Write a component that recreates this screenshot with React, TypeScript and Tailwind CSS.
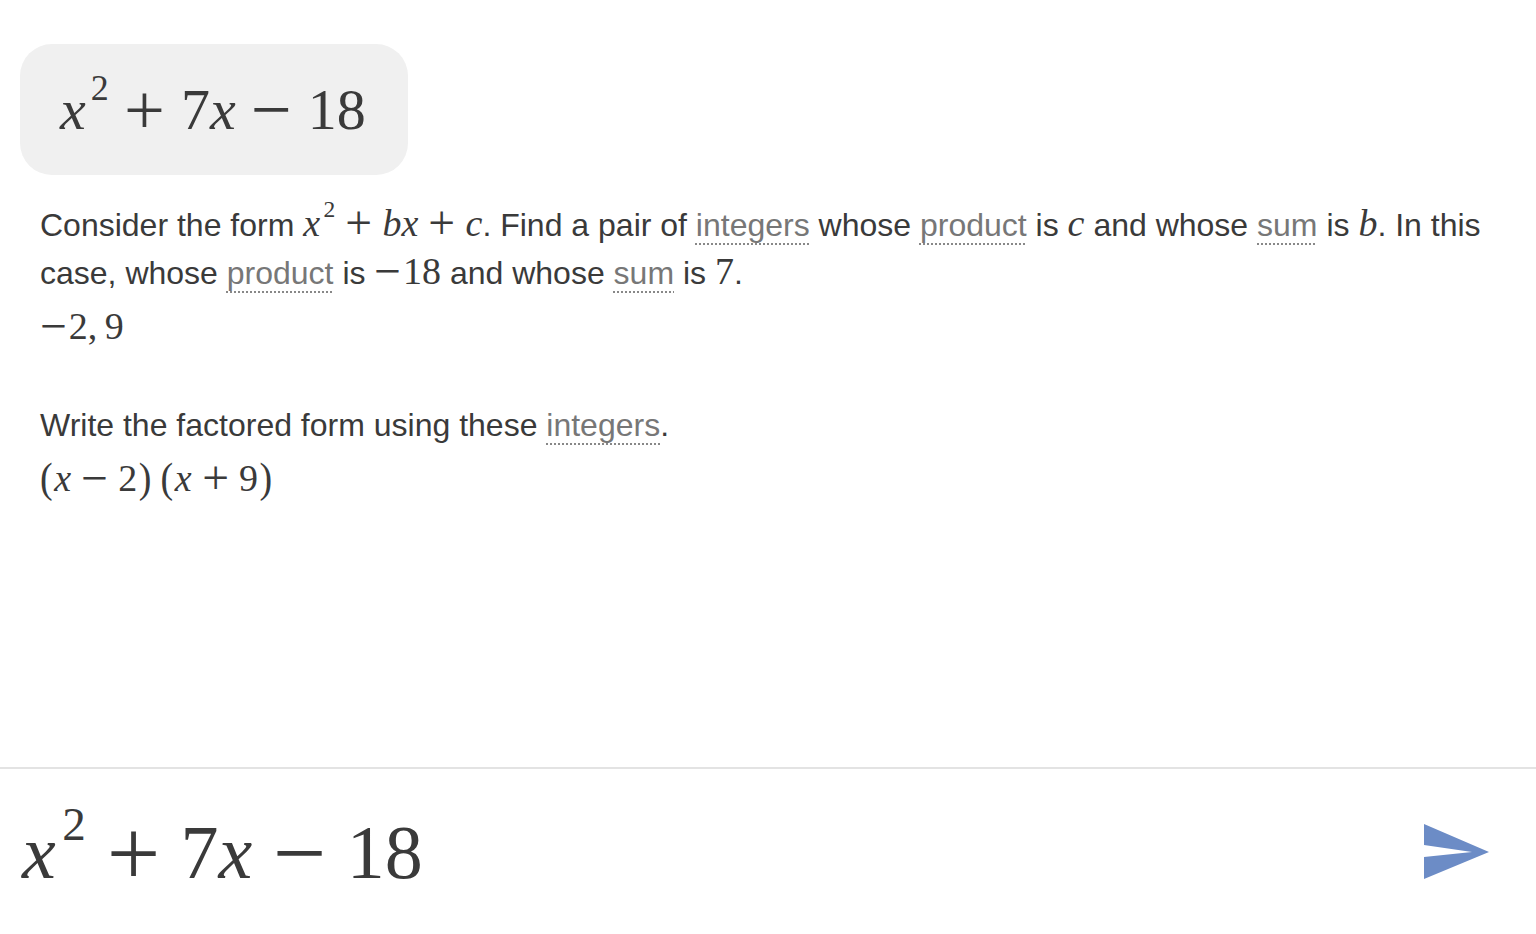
import React from "react";

const serif = { fontFamily: '"Liberation Serif", "DejaVu Serif", serif' };

function V({ children }: { children: React.ReactNode }) {
  return <span className="italic">{children}</span>;
}

// binary operator, scaled up to the look of the TeX font
function Op({ children }: { children: React.ReactNode }) {
  return <span className="mx-[0.34em] inline-block scale-125 leading-none">{children}</span>;
}

function Neg() {
  return <span className="ml-[0.07em] mr-[0.12em] inline-block scale-125 leading-none">−</span>;
}

function Sq() {
  return <sup className="-top-[0.8em] ml-[0.14em] text-[0.62em]">2</sup>;
}

function Term({ children }: { children: React.ReactNode }) {
  return (
    <span className="text-[#777] underline decoration-dotted decoration-[#888] decoration-2 underline-offset-[7px]">
      {children}
    </span>
  );
}

function M({ children }: { children: React.ReactNode }) {
  return (
    <span style={serif} className="text-[38px] leading-none">
      {children}
    </span>
  );
}

function Paren({ children, className = "" }: { children: React.ReactNode; className?: string }) {
  return <span className={"mx-[0.04em] inline-block scale-y-110 " + className}>{children}</span>;
}

function Quadratic() {
  return (
    <>
      <V>x</V>
      <Sq />
      <Op>+</Op>7<V>x</V>
      <Op>−</Op>18
    </>
  );
}

export default function App() {
  return (
    <div className="flex h-[934px] w-full flex-col bg-white text-[#3a3a3a]">
      <div className="flex-1 px-5 pt-11">
        <div className="inline-flex h-[131px] items-center rounded-[32px] bg-[#f0f0f0] pl-10 pr-[42px]">
          <span style={serif} className="text-[58px] leading-none">
            <Quadratic />
          </span>
        </div>

        <div
          className="px-5 pt-[26px] text-[32px] leading-[48px]"
          style={{ fontFamily: '"Liberation Sans", Arial, sans-serif' }}
        >
          <p>
            Consider the form{" "}
            <M>
              <V>x</V>
              <Sq />
              <Op>+</Op>
              <V>bx</V>
              <Op>+</Op>
              <V>c</V>
            </M>
            . Find a pair of <Term>integers</Term> whose <Term>product</Term> is <M><V>c</V></M> and
            whose <Term>sum</Term> is <M><V>b</V></M>. In this case, whose <Term>product</Term> is{" "}
            <M>
              <Neg />
              18
            </M>{" "}
            and whose <Term>sum</Term> is <M>7</M>.
          </p>
          <p className="mt-[7px]">
            <M>
              <Neg />
              2,<span className="ml-[0.2em]">9</span>
            </M>
          </p>

          <p className="mt-[49px]">
            Write the factored form using these <Term>integers</Term>.
          </p>
          <p className="mt-[7px]">
            <M>
              <Paren className="ml-0">(</Paren>
              <V>x</V>
              <Op>−</Op>2<Paren>)</Paren>
              <Paren className="ml-[0.2em]">(</Paren>
              <V>x</V>
              <Op>+</Op>9<Paren>)</Paren>
            </M>
          </p>
        </div>
      </div>

      <div className="flex h-[167px] items-center justify-between border-t-2 border-[#e3e3e3] pl-[22px] pr-[46px]">
        <span style={serif} className="text-[76px] leading-none">
          <Quadratic />
        </span>
        <button aria-label="Send" className="flex items-center">
          <svg width="66" height="56" viewBox="0 0 66 56">
            <polygon points="0,0 65,28 0,55 0,33 48,28 0,21" fill="#6c8cc6" />
          </svg>
        </button>
      </div>
    </div>
  );
}
